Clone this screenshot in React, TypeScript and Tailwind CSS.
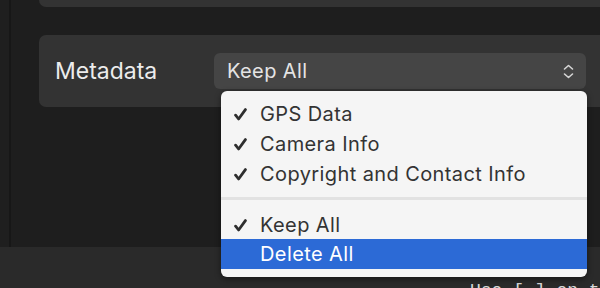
import React from 'react'

const items = ['GPS Data', 'Camera Info', 'Copyright and Contact Info']

function Check({ className = '' }: { className?: string }) {
  return (
    <svg width="13" height="13" viewBox="0 0 13 13" className={className}>
      <path d="M1.6 7.2 L4.6 11 L11.4 1.6" fill="none" stroke="currentColor" strokeWidth="2.8" strokeLinecap="round" strokeLinejoin="round" />
    </svg>
  )
}

function MenuItem({ label, checked, active }: { label: string; checked?: boolean; active?: boolean }) {
  return (
    <div className={`flex h-[30px] items-center ${active ? 'bg-[#2c6ad6] text-white' : 'text-[#333333]'}`}>
      <div className="flex w-[39px] justify-end pr-[13px] pt-[1px]">
        {checked && <Check className="text-[#2e2e2e]" />}
      </div>
      <span className="text-[20px] leading-none tracking-[0.4px]">{label}</span>
    </div>
  )
}

export default function App() {
  return (
    <div className="flex h-[288px] w-[600px] flex-col overflow-hidden bg-[#1e1e1e] font-['Inter','Liberation_Sans',sans-serif]">
      <div className="flex h-[247px] shrink-0">
        <div className="w-[9px] bg-[#1f1f1f]" />
        <div className="w-[2px] bg-[#171717]" />
        <div className="flex flex-1 flex-col pl-[28px]">
          <div className="-mr-[8px] h-[7px] rounded-b-[7px] bg-[#333333]" />
          {/* Metadata row */}
          <div className="-mr-[8px] mt-[28px] flex h-[72px] items-center rounded-[7px] bg-[#333333] pl-[16px]">
            <span className="w-[159px] text-[23px] text-[#ececec]">Metadata</span>
            <div className="relative flex h-[36px] w-[372px] items-center rounded-[6px] bg-[#454545] pl-[13px] pr-[12px]">
              <span className="flex-1 text-[20px] tracking-[0.4px] text-[#e4e4e4]">Keep All</span>
              <svg width="11" height="15" viewBox="0 0 11 15" className="text-[#d6d6d6]">
                <path d="M1.5 5 L5.5 1.5 L9.5 5 M1.5 10 L5.5 13.5 L9.5 10" fill="none" stroke="currentColor" strokeWidth="1.6" strokeLinecap="round" strokeLinejoin="round" />
              </svg>
              {/* dropdown */}
              <div className="absolute left-[7px] top-[38px] z-10 w-[366px] rounded-[6px] bg-[#f5f5f5] pb-[8px] pt-[8px] shadow-[0_2px_6px_rgba(0,0,0,0.45)]">
                {items.map((t) => (
                  <MenuItem key={t} label={t} checked />
                ))}
                <div className="mb-[10px] mt-[8px] h-[3px] bg-[#e2e2e2]" />
                <div className="-mb-[1px]">
                  <MenuItem label="Keep All" checked />
                </div>
                <MenuItem label="Delete All" active />
              </div>
            </div>
          </div>
        </div>
      </div>
      <div className="h-[2px] bg-[#161616]" />
      <div className="flex flex-1 bg-[#2a2a2a] pl-[470px] pt-[35px]">
        <span className="whitespace-nowrap font-['Liberation_Mono',monospace] text-[18px] leading-none text-[#d8d8d8]">Use [ ] on the</span>
      </div>
    </div>
  )
}
